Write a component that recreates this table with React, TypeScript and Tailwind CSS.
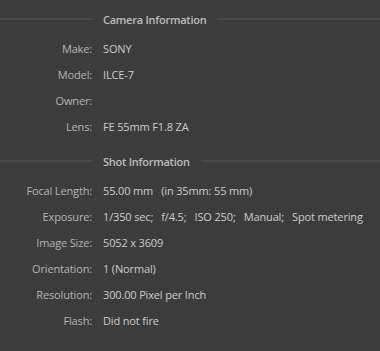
import React from "react";

const font = { fontFamily: '"Open Sans", "Noto Sans", sans-serif' };

function Header({ title, className }: { title: string; className: string }) {
  return (
    <div className={`flex h-[20px] items-center ${className}`}>
      <div className="h-[2px] w-[92px] shrink-0 bg-[#4a4a4a]" />
      <div className="px-[11px] text-[11px] font-semibold tracking-[-0.25px] text-[#bcbcbc] leading-none">{title}</div>
      <div className="h-[2px] flex-1 bg-[#4a4a4a]" />
    </div>
  );
}

function Row({ label, value }: { label: string; value: string }) {
  return (
    <div className="flex h-[26px] items-center text-[11px] tracking-[-0.15px] leading-none pt-[1px]">
      <div className="w-[92px] shrink-0 text-right text-[#b5b5b5]">{label}</div>
      <div className="pl-[11px] text-[#cccccc] whitespace-pre">{value}</div>
    </div>
  );
}

export default function App() {
  return (
    <div className="h-[351px] w-[380px] overflow-hidden bg-[#3c3c3c]" style={font}>
      <div className="h-[9px]" />
      <Header title="Camera Information" className="" />
      <div className="mt-[6px]">
        <Row label="Make:" value="SONY" />
        <Row label="Model:" value="ILCE-7" />
        <Row label="Owner:" value="" />
        <Row label="Lens:" value="FE 55mm F1.8 ZA" />
      </div>
      <Header title="Shot Information" className="mt-[12px]" />
      <div className="mt-[6px]">
        <Row label="Focal Length:" value="55.00 mm   (in 35mm: 55 mm)" />
        <Row label="Exposure:" value="1/350 sec;   f/4.5;   ISO 250;   Manual;   Spot metering" />
        <Row label="Image Size:" value="5052 x 3609" />
        <Row label="Orientation:" value="1 (Normal)" />
        <Row label="Resolution:" value="300.00 Pixel per Inch" />
        <Row label="Flash:" value="Did not fire" />
      </div>
    </div>
  );
}
